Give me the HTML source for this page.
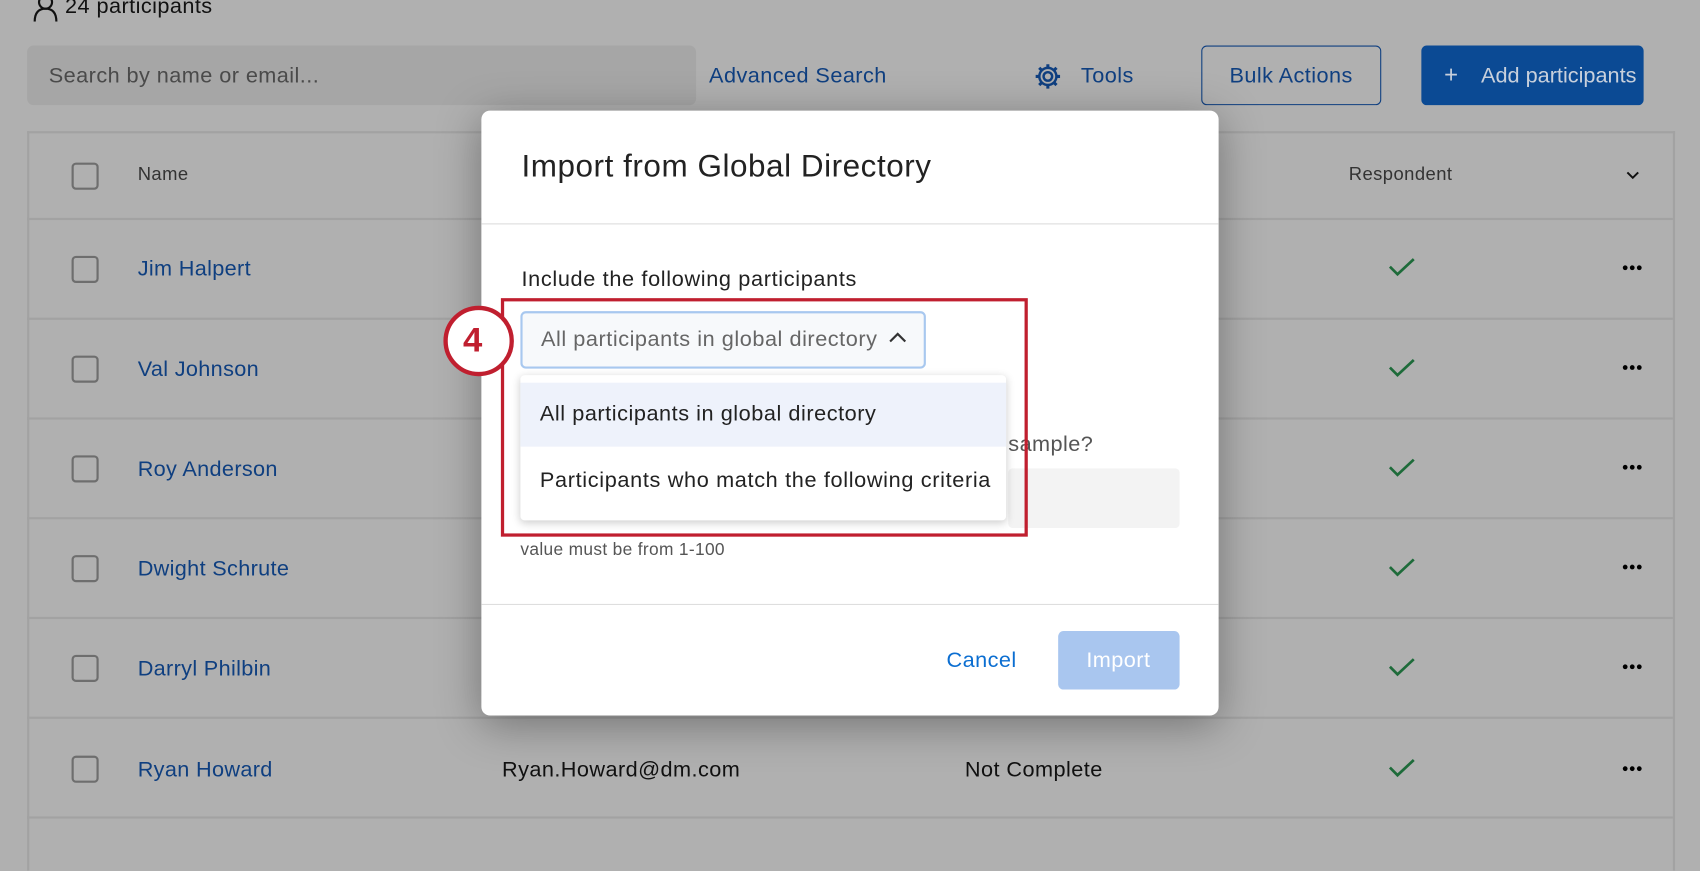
<!DOCTYPE html>
<html><head><meta charset="utf-8"><style>
html,body{margin:0;padding:0;width:1700px;height:850px;overflow:hidden;background:#b0b0b0;font-family:"Liberation Sans",sans-serif}
#w{position:absolute;left:0;top:0;width:1568px;height:784px;transform:scale(1.08418);transform-origin:0 0;background:#b0b0b0}
.a{position:absolute}
.t{position:absolute;white-space:nowrap;letter-spacing:0.4px}
.row{position:absolute;left:25px;width:1518px;border-top:2px solid #a2a2a2}
.cb{position:absolute;left:66px;width:21px;height:21px;border:2px solid #6e6e6e;border-radius:4px}
.nm{position:absolute;left:127px;font-size:20px;color:#0f3f80;letter-spacing:0.3px}
.ck{position:absolute;left:1280px}
.dots{position:absolute;left:1496px}
</style></head><body><div id="w">
<svg class="a" style="left:30px;top:-6px" width="26" height="26" viewBox="0 0 26 26"><circle cx="12" cy="8" r="6" fill="none" stroke="#111" stroke-width="2"/><path d="M2 26 Q2 14 12 14 Q22 14 22 26" fill="none" stroke="#111" stroke-width="2"/></svg>
<div class="t" style="left:60px;top:-5px;font-size:20px;color:#111">24 participants</div>
<div class="a" style="left:25px;top:42px;width:617px;height:55px;background:#a6a6a6;border-radius:6px"></div>
<div class="t" style="left:45px;top:59px;font-size:20px;color:#4a4a4a">Search by name or email...</div>
<div class="t" style="left:654px;top:59px;font-size:20px;color:#0f3f80">Advanced Search</div>
<svg class="a" style="left:953px;top:57px" width="27" height="27" viewBox="0 0 24 24"><circle cx="12" cy="12" r="3.5" fill="none" stroke="#0f3f80" stroke-width="2"/><path d="M12 2v3M12 19v3M2 12h3M19 12h3M4.9 4.9l2.1 2.1M17 17l2.1 2.1M4.9 19.1L7 17M17 7l2.1-2.1" stroke="#0f3f80" stroke-width="2.5"/><circle cx="12" cy="12" r="7" fill="none" stroke="#0f3f80" stroke-width="2"/></svg>
<div class="t" style="left:997px;top:59px;font-size:20px;color:#0f3f80">Tools</div>
<div class="a" style="left:1108px;top:42px;width:164px;height:53px;border:1.5px solid #0f3f80;border-radius:5px"></div>
<div class="t" style="left:1134px;top:59px;font-size:20px;color:#0f3f80">Bulk Actions</div>
<div class="a" style="left:1311px;top:42px;width:205px;height:55px;background:#0b4a94;border-radius:5px"></div>
<div class="t" style="left:1332px;top:56px;font-size:22px;color:#c8d0dc">+</div>
<div class="t" style="left:1366px;top:59px;font-size:20px;color:#c8d0dc;letter-spacing:0">Add participants</div>
<div class="a" style="left:25px;top:121px;width:1516px;height:680px;border:2px solid #a2a2a2;border-bottom:none"></div>
<div class="cb" style="top:150px"></div>
<div class="t" style="left:127px;top:151px;font-size:17px;color:#333">Name</div>
<div class="t" style="left:1244px;top:151px;font-size:17px;color:#333">Respondent</div>
<svg class="a" style="left:1500px;top:158px" width="12" height="8"><path d="M1 1l5 5 5-5" fill="none" stroke="#111" stroke-width="1.8"/></svg>
<div class="row" style="top:201px"></div><div class="row" style="top:293px"></div><div class="row" style="top:385px"></div><div class="row" style="top:477px"></div><div class="row" style="top:569px"></div><div class="row" style="top:661px"></div><div class="row" style="top:753px"></div>
<div class="cb" style="top:236px"></div><div class="nm" style="top:237px">Jim Halpert</div>
<div class="cb" style="top:328px"></div><div class="nm" style="top:330px">Val Johnson</div>
<div class="cb" style="top:420px"></div><div class="nm" style="top:422px">Roy Anderson</div>
<div class="cb" style="top:512px"></div><div class="nm" style="top:514px">Dwight Schrute</div>
<div class="cb" style="top:604px"></div><div class="nm" style="top:606px">Darryl Philbin</div>
<div class="cb" style="top:697px"></div><div class="nm" style="top:699px">Ryan Howard</div>
<div class="t" style="left:463px;top:699px;font-size:20px;color:#111">Ryan.Howard@dm.com</div>
<div class="t" style="left:890px;top:699px;font-size:20px;color:#111">Not Complete</div>
<svg class="ck" style="top:236px" width="26" height="20"><path d="M2 10l7 7L24 3" fill="none" stroke="#1e6b3a" stroke-width="2.5"/></svg>
<svg class="ck" style="top:329px" width="26" height="20"><path d="M2 10l7 7L24 3" fill="none" stroke="#1e6b3a" stroke-width="2.5"/></svg>
<svg class="ck" style="top:421px" width="26" height="20"><path d="M2 10l7 7L24 3" fill="none" stroke="#1e6b3a" stroke-width="2.5"/></svg>
<svg class="ck" style="top:513px" width="26" height="20"><path d="M2 10l7 7L24 3" fill="none" stroke="#1e6b3a" stroke-width="2.5"/></svg>
<svg class="ck" style="top:605px" width="26" height="20"><path d="M2 10l7 7L24 3" fill="none" stroke="#1e6b3a" stroke-width="2.5"/></svg>
<svg class="ck" style="top:698px" width="26" height="20"><path d="M2 10l7 7L24 3" fill="none" stroke="#1e6b3a" stroke-width="2.5"/></svg>
<svg class="dots" style="top:244px" width="20" height="6"><circle cx="3" cy="3" r="2.2"/><circle cx="9.5" cy="3" r="2.2"/><circle cx="16" cy="3" r="2.2"/></svg>
<svg class="dots" style="top:336px" width="20" height="6"><circle cx="3" cy="3" r="2.2"/><circle cx="9.5" cy="3" r="2.2"/><circle cx="16" cy="3" r="2.2"/></svg>
<svg class="dots" style="top:428px" width="20" height="6"><circle cx="3" cy="3" r="2.2"/><circle cx="9.5" cy="3" r="2.2"/><circle cx="16" cy="3" r="2.2"/></svg>
<svg class="dots" style="top:520px" width="20" height="6"><circle cx="3" cy="3" r="2.2"/><circle cx="9.5" cy="3" r="2.2"/><circle cx="16" cy="3" r="2.2"/></svg>
<svg class="dots" style="top:612px" width="20" height="6"><circle cx="3" cy="3" r="2.2"/><circle cx="9.5" cy="3" r="2.2"/><circle cx="16" cy="3" r="2.2"/></svg>
<svg class="dots" style="top:706px" width="20" height="6"><circle cx="3" cy="3" r="2.2"/><circle cx="9.5" cy="3" r="2.2"/><circle cx="16" cy="3" r="2.2"/></svg>

<div class="a" style="left:444px;top:102px;width:680px;height:558px;background:#fff;border-radius:8px;box-shadow:0 8px 40px rgba(0,0,0,.35)"></div>
<div class="t" style="left:481px;top:138px;font-size:29px;color:#222;letter-spacing:0.5px">Import from Global Directory</div>
<div class="a" style="left:444px;top:206px;width:680px;height:1px;background:#ddd"></div>
<div class="t" style="left:481px;top:247px;font-size:20px;color:#222;letter-spacing:0.6px">Include the following participants</div>
<div class="t" style="left:930px;top:399px;font-size:20px;color:#555">sample?</div>
<div class="a" style="left:930px;top:432px;width:158px;height:55px;background:#f3f3f3;border-radius:4px"></div>
<div class="t" style="left:480px;top:499px;font-size:16px;color:#555;letter-spacing:0.3px">value must be from 1-100</div>
<div class="a" style="left:444px;top:557px;width:680px;height:1px;background:#ddd"></div>
<div class="t" style="left:873px;top:598px;font-size:20px;color:#0b6ed1">Cancel</div>
<div class="a" style="left:976px;top:582px;width:112px;height:54px;background:#a9c6ef;border-radius:5px"></div>
<div class="t" style="left:1002px;top:598px;font-size:20px;color:#fff">Import</div>
<div class="a" style="left:480px;top:287px;width:370px;height:49px;border:2px solid #a8c8ef;border-radius:5px;background:#f7f9fb"></div>
<div class="t" style="left:499px;top:302px;font-size:20px;color:#666;letter-spacing:0.5px">All participants in global directory</div>
<svg class="a" style="left:819px;top:305px" width="18" height="12"><path d="M2 10l7-7 7 7" fill="none" stroke="#333" stroke-width="2"/></svg>
<div class="a" style="left:480px;top:346px;width:448px;height:134px;background:#fff;border-radius:4px;box-shadow:0 2px 8px rgba(0,0,0,.2)"></div>
<div class="a" style="left:480px;top:353px;width:448px;height:59px;background:#eef2fb"></div>
<div class="t" style="left:498px;top:371px;font-size:20px;color:#222;letter-spacing:0.5px">All participants in global directory</div>
<div class="t" style="left:498px;top:432px;font-size:20px;color:#222;letter-spacing:0.6px">Participants who match the following criteria</div>
<div class="a" style="left:462px;top:275px;width:480px;height:214px;border:3.5px solid #c01f2f"></div>
<div class="a" style="left:409px;top:282px;width:57px;height:57px;border:4px solid #c01f2f;border-radius:50%;background:#fff"></div>
<div class="t" style="left:427px;top:295px;font-size:32px;font-weight:bold;color:#c01f2f">4</div>
</div></body></html>
